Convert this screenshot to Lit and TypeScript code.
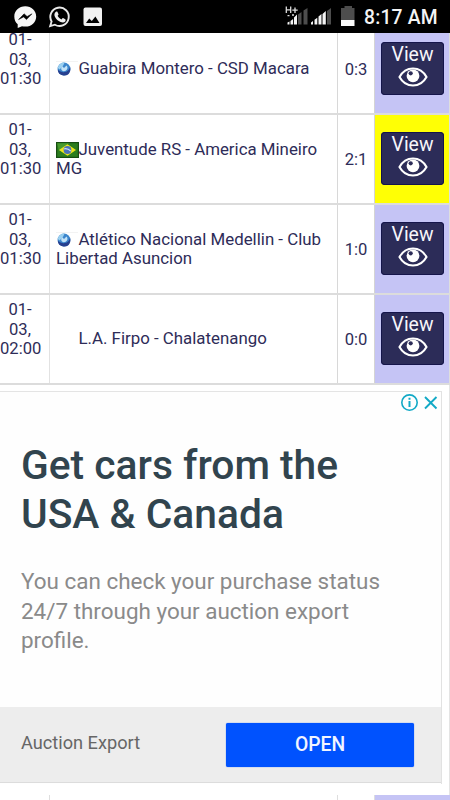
import { LitElement, html, css, nothing } from "lit";
import { customElement, property } from "lit/decorators.js";

type Flag = "globe" | "brazil" | "none";
interface Match {
  date: string[];
  flag: Flag;
  teams: string[];
  score: string;
  hot?: boolean;
}

const MATCHES: Match[] = [
  { date: ["01-", "03,", "01:30"], flag: "globe", teams: ["Guabira Montero - CSD Macara"], score: "0:3" },
  { date: ["01-", "03,", "01:30"], flag: "brazil", teams: ["Juventude RS - America Mineiro", "MG"], score: "2:1", hot: true },
  { date: ["01-", "03,", "01:30"], flag: "globe", teams: ["Atlético Nacional Medellin - Club", "Libertad Asuncion"], score: "1:0" },
  { date: ["01-", "03,", "02:00"], flag: "none", teams: ["L.A. Firpo - Chalatenango"], score: "0:0" },
];

@customElement("status-bar")
export class StatusBar extends LitElement {
  static styles = css`
    :host {
      display: flex;
      align-items: flex-start;
      justify-content: space-between;
      height: 33px;
      background: #000;
      color: #f4f4f4;
      position: relative;
      z-index: 1;
    }
    svg { display: block; }
    .right { display: flex; }
    .time {
      width: 86px;
      font: 500 19.3px/22px Roboto, sans-serif;
      letter-spacing: 0.2px;
      padding-top: 7px;
      white-space: nowrap;
    }
  `;
  render() {
    return html`
      <svg width="110" height="33" viewBox="0 0 110 33">
        <path fill="#f6f6f6" d="M25.3 6.2c6.2 0 10.9 4.4 10.9 10.2s-4.700 10.200-10.900 10.200c-1.200 0-2.300-.15-3.300-.45L17.700 28v-3.700c-2.200-1.900-3.400-4.700-3.400-7.900 0-5.800 4.700-10.200 11-10.200z" />
        <path d="M18.600 19.600l5.500-5.800 3 2.700 4.900-2.700-5.500 5.800-2.900-2.700z" fill="#000" stroke="#000" stroke-width=".5" />
        <path fill="none" stroke="#e9e9e9" stroke-width="1.900" d="M50.200 26.100l1.400-4.700a9.200 9.200 0 1 1 3.300 3.300z" />
        <path fill="#eee" d="M55.900 11.800c.5-.4 1.300-.5 1.600.1l1 2.300c.2.500-.5 1.100-.9 1.600.9 1.700 2.200 2.800 4 3.600.6-.6 1-1.400 1.500-1.300l2.200 1.100c.5.300.4 1.600-.1 2.200-1 1.200-2.700 1.400-4.600.6-2.600-1-4.400-2.800-5.700-5.200-1-2-.5-3.900 1-5z" />
        <rect x="83.500" y="7.500" width="18.500" height="18.500" rx="2" fill="#f1f1f1" />
        <path d="M86 23l3.200-4.600 2.600 2.700 3.600-4.600L99.500 23z" fill="#000" />
      </svg>
      <div class="right">
        <svg width="80" height="33" viewBox="284 0 80 33">
          <path fill="#4d4d4d" d="M298 14.500l3.500-2.500v12.500H298zM303.500 10.500l4-2.500v16.500h-4zM327 11l4-3v16.500h-4z" />
          <path fill="#f4f4f4" d="M287.500 24.500v-2l2-1v3zM290.500 24.500V21l2.600-2v5.500zM294 24.500v-7l3-3v10zM311 24.500v-2l2-1.500v3.500zM314.500 24.500v-4.700l2.800-2v6.700zM318.500 24.500v-8l3-2.500v10.500zM322.500 24.500V14l3.300-3v13.500z" />
          <path stroke="#ddd" stroke-width="1.300" fill="none" d="M286.300 6.500v6.600M290.700 6.500v6.600M286.300 9.800h4.400M292.300 10.200h5.400M295 7.500v5.400M287.500 15.600h2M292 15h2" />
          <path fill="#4d4d4d" d="M341 8h3.500V6h7.500v2h2.500v12H341z" />
          <path fill="#fafafa" d="M341 20h13.500v6H341z" />
        </svg>
        <div class="time">8:17 AM</div>
      </div>
    `;
  }
}

const globe = html`<svg class="flag" viewBox="0 0 23 16">
  <path d="M0 .5h22" stroke="#f3f3f3" stroke-width="1" />
  <circle cx="8" cy="8" r="6.400" fill="#3c86cc" />
  <path d="M1.700 7a6.400 6.400 0 0 1 7-5.400l-1.500 3-3.500 4z" fill="#9bd0f0" />
  <path d="M1.700 8.500a6.400 6.400 0 0 0 12.500 1.500 7 7 0 0 0-.2-4C13 11 6.500 13.500 1.700 8.500z" fill="#27408f" />
  <path d="M6 5l2 2 2.500-2.500c1.600 1.500 1.300 4-.8 5.200-2.200 1-4.300.2-4.500-1.600-.1-1.200.2-2.300.8-3.100z" fill="#c2e2f7" />
</svg>`;

const brazil = html`<svg class="flag" viewBox="0 0 23 16">
  <rect x=".6" y=".6" width="21.800" height="14.800" fill="#2c7d1e" stroke="#174d12" stroke-width="1.200" />
  <path d="M1.200 1.200h12L3 9z" fill="#479a2d" />
  <path d="M3 8l8.500-5.700L20 8l-8.500 5.700z" fill="#efe51c" />
  <circle cx="11.500" cy="8" r="3.900" fill="#4a72b8" />
  <path d="M8.200 6.800c2.500-.4 4.800.4 6.600 2.300" fill="none" stroke="#cfe0f4" stroke-width="1.200" />
</svg>`;

const blank = html`<svg class="flag" viewBox="0 0 23 16"></svg>`;

@customElement("match-row")
export class MatchRow extends LitElement {
  @property({ attribute: false }) match!: Match;
  static styles = css`
    :host { display: block; }
    .row {
      display: grid;
      grid-template-columns: 50px 288px 37px 75px;
      height: 88px;
      border-bottom: 2px solid #dcdcdc;
      font: 16.600px/19.500px Roboto, sans-serif;
      color: #2e2c58;
    }
    .date { padding-top: 5px; padding-right: 9px; text-align: center; border-right: 1px solid #e2e2e2; white-space: nowrap; }
    .teams { display: flex; flex-direction: column; justify-content: center; padding-left: 6px; white-space: nowrap; border-right: 1px solid #d8d8d8; font-size: 16.850px; }
    .line { height: 19.500px; }
    .flag { width: 23px; height: 16px; vertical-align: -3px; margin-right: -0.500px; }
    .score { display: flex; align-items: center; justify-content: center; padding-top: 1px; border-right: 1px solid #d4d4d4; }
    .view { background: #c5c4f5; display: flex; padding: 17px 0 0 6px; border-right: 1px solid #dedede; }
    .hot { background: #ffff05; }
    .button {
      width: 63px; height: 53px; border-radius: 4px; background: #2c2c58;
      box-shadow: inset 0 0 0 1px #15154a;
      color: #f7f7fb; font-size: 19.400px; line-height: 22px; text-align: center;
      padding-top: 2px; box-sizing: border-box;
    }
    .eye { display: block; margin: 1px auto 0; }
  `;
  render() {
    const m = this.match;
    const flag = m.flag === "globe" ? globe : m.flag === "brazil" ? brazil : blank;
    return html`<div class="row">
      <div class="date">${m.date.map((d) => html`<div>${d}</div>`)}</div>
      <div class="teams">
        ${m.teams.map((t, i) => html`<div class="line">${i === 0 ? flag : nothing}<span>${t}</span></div>`)}
      </div>
      <div class="score">${m.score}</div>
      <div class="view ${m.hot ? "hot" : ""}">
        <div class="button">View
          <svg class="eye" width="30" height="20" viewBox="0 0 30 20">
            <path d="M1.500 10C4.500 4.500 9 1.500 15 1.500S25.500 4.500 28.500 10C25.500 15.500 21 18.500 15 18.500S4.500 15.500 1.500 10z" fill="none" stroke="#fff" stroke-width="2.100" />
            <circle cx="15" cy="8.800" r="6.400" fill="#fff" />
            <circle cx="12.700" cy="6.300" r="2.100" fill="#2c2c58" />
          </svg>
        </div>
      </div>
    </div>`;
  }
}

@customElement("ad-card")
export class AdCard extends LitElement {
  static styles = css`
    :host { display: block; box-sizing: border-box; width: 442px; height: 393px; border-top: 1px solid #e4e4e4; border-right: 1px solid #e2e2e2; font-family: Roboto, sans-serif; background: #fefefe; }
    .marks { display: flex; justify-content: flex-end; height: 22px; }
    svg { display: block; }
    h1 { margin: 27px 0 0 21px; font-weight: 500; font-size: 40.750px; line-height: 49px; color: #31444e; white-space: nowrap; }
    p { margin: 28px 0 0 21px; height: 140px; font-size: 22.450px; line-height: 29.500px; color: #8a8a8a; white-space: nowrap; }
    .foot { display: flex; align-items: center; justify-content: space-between; height: 76px; box-sizing: border-box; border-bottom: 1px solid #dcdcdc; background: #ededed; padding: 0 27px 0 21px; }
    .brand { font-size: 18.200px; color: #666; padding-bottom: 5px; }
    .open { width: 188px; height: 44px; border-radius: 2px; background: #0052fe; color: #f2f5ff; font-weight: 500; font-size: 19.300px; line-height: 43px; text-align: center; box-shadow: 0 0 1px #0052fe; }
  `;
  render() {
    return html`
      <div class="marks">
        <svg width="42" height="22" viewBox="399 392 42 22" fill="none" stroke="#12a9c6">
          <circle cx="409.500" cy="402.600" r="7.700" stroke-width="1.600" />
          <path d="M409.500 401v6M409.500 397.700v2" stroke-width="2" />
          <path d="M425 397l11.500 11.500M436.500 397L425 408.500" stroke-width="1.900" />
        </svg>
      </div>
      <h1>Get cars from the<br />USA &amp; Canada</h1>
      <p>You can check your purchase status<br />24/7 through your auction export<br />profile.</p>
      <div class="foot"><span class="brand">Auction Export</span><div class="open">OPEN</div></div>
    `;
  }
}

@customElement("app-root")
export class AppRoot extends LitElement {
  static styles = css`
    :host { display: block; width: 450px; height: 800px; overflow: hidden; background: #fff; }
    .page { margin-top: -8px; }
    .frame { padding: 6px 0 11px; border-right: 1px solid #e4e4e4; }
    .next { display: grid; grid-template-columns: 50px 288px 37px 75px; height: 5px; }
    .c { border-right: 1px solid #dedede; }
    .v { background: #c5c4f5; }
  `;
  render() {
    return html`
      <status-bar></status-bar>
      <div class="page">
        ${MATCHES.map((m) => html`<match-row .match=${m}></match-row>`)}
        <div class="frame"><ad-card></ad-card></div>
        <div class="next"><div class="c"></div><div class="c"></div><div class="c"></div><div class="v"></div></div>
      </div>
    `;
  }
}
